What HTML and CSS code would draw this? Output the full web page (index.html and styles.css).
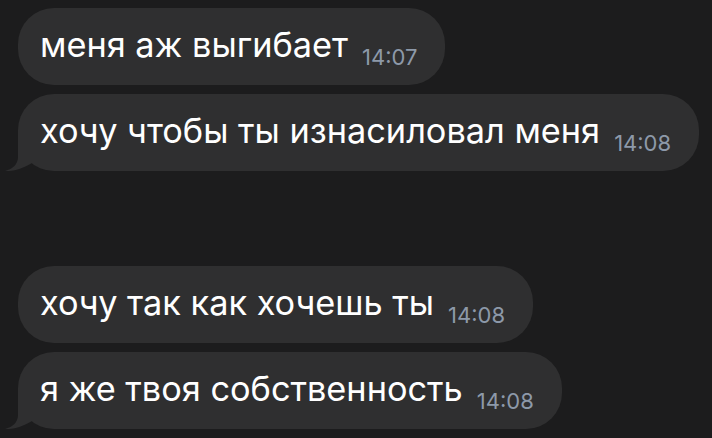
FILE: index.html
```html
<!DOCTYPE html>
<html lang="ru">
  <head>
    <meta charset="UTF-8" />
    <meta name="viewport" content="width=device-width, initial-scale=1.0" />
    <title>Чат</title>
    <link rel="stylesheet" href="styles.css">
  </head>
  <body>
    <div class="chat">
      <div class="group">
        <div class="msg">
          <span class="text">меня аж выгибает</span><span class="time">14:07</span>
        </div>
        <div class="msg">
          <span class="text">хочу чтобы ты изнасиловал меня</span><span class="time">14:08</span>
          <svg class="tail" width="44" height="40" viewBox="-14 -40 44 40">
            <path d="M0 -40 L0 -14 C0 -7 -5 -2 -13 0 C-4 0.5 6 -3 14 -8 L30 -8 L30 -40 Z" fill="#2f2f30" />
          </svg>
        </div>
      </div>
      <div class="group">
        <div class="msg">
          <span class="text">хочу так как хочешь ты</span><span class="time">14:08</span>
        </div>
        <div class="msg">
          <span class="text">я же твоя собственность</span><span class="time">14:08</span>
          <svg class="tail" width="44" height="40" viewBox="-14 -40 44 40">
            <path d="M0 -40 L0 -14 C0 -7 -5 -2 -13 0 C-4 0.5 6 -3 14 -8 L30 -8 L30 -40 Z" fill="#2f2f30" />
          </svg>
        </div>
      </div>
    </div>
  </body>
</html>
```
FILE: styles.css
```css
* {
  margin: 0;
  padding: 0;
  box-sizing: border-box;
}
html,
body {
  height: 100%;
  background-color: #1c1c1d;
}
body {
  font-family: Inter, "Noto Sans", sans-serif;
  color: #fff;
  overflow: hidden;
}
.chat {
  padding: 8px 0 0 18px;
  display: flex;
  flex-direction: column;
  gap: 95px;
}
.group {
  display: flex;
  flex-direction: column;
  align-items: flex-start;
  gap: 9px;
}
.msg {
  position: relative;
  z-index: 0;
  height: 77px;
  padding: 17px 28px 0 22px;
  background-color: #2f2f30;
  border-radius: 36px;
  line-height: 40px;
  white-space: nowrap;
}
/* хвостик у последнего сообщения, под текстом */
.tail {
  position: absolute;
  z-index: -1;
  left: -14px;
  bottom: 0;
}
.text {
  font-size: 34.3px;
}
.time {
  font-size: 22px;
  line-height: 22px;
  color: #8d99a9;
  margin-left: 14px;
  vertical-align: -8px;
}
```
